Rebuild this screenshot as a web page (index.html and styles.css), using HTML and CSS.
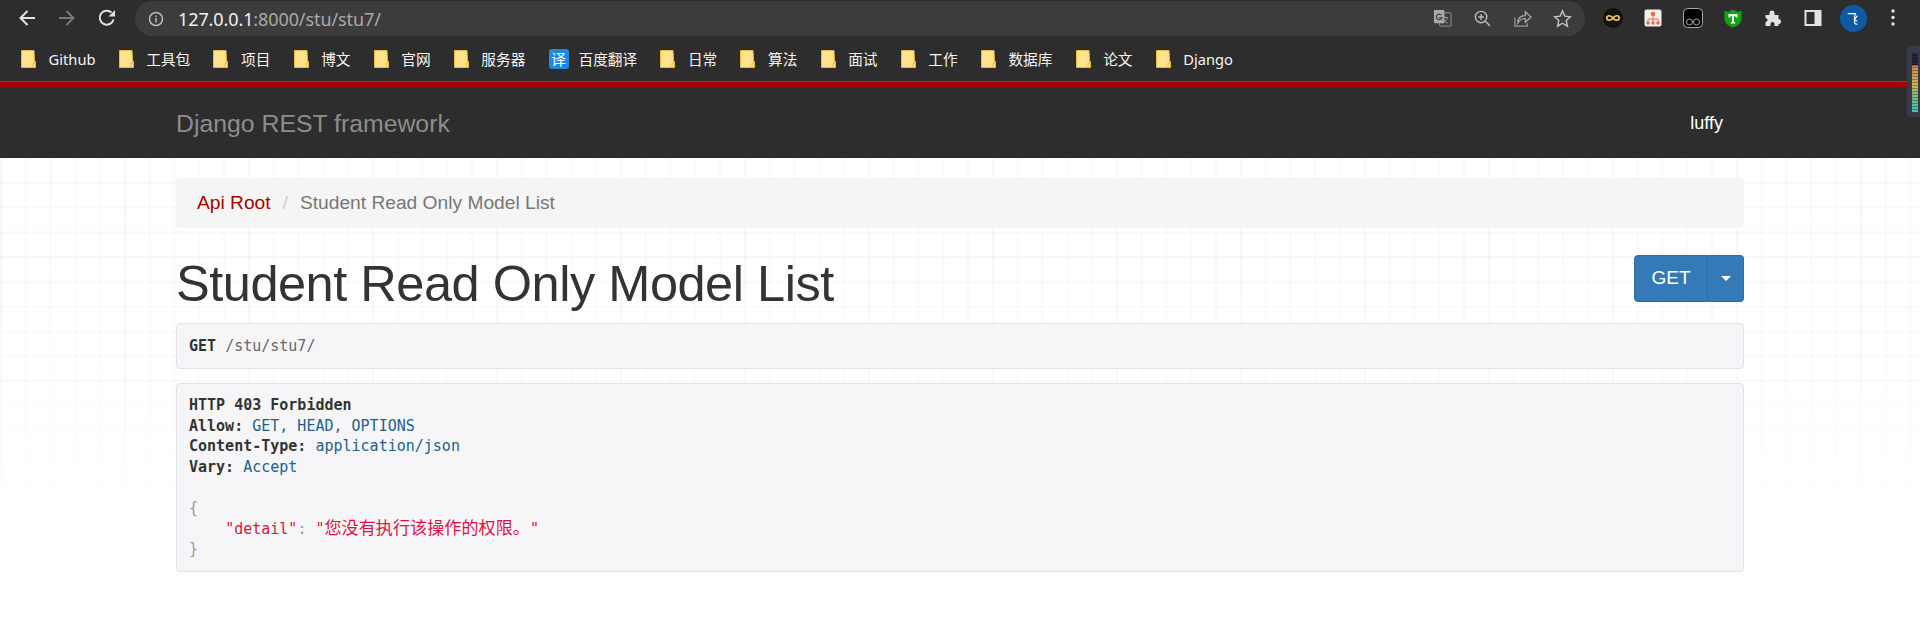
FILE: index.html
```html
<!DOCTYPE html>
<html lang="en">
<head>
<meta charset="utf-8">
<title>Student Read Only Model List</title>
<link rel="stylesheet" href="styles.css">
</head>
<body>
<svg class="defs" aria-hidden="true"><symbol id="folder" viewBox="0 0 15 18"><path d="M.5.500h12.500l.6 11h.9v6H.5z" fill="#ffe38a" stroke="#e8b93f"/><path d="M12 17v-4h2.500" fill="none" stroke="#e8b93f"/></symbol></svg>
<header class="chrome">
  <div class="toolbar">
    <div class="nav-buttons">
      <svg class="nav-icon" viewBox="0 0 20 20"><path d="M18 10H4M10.500 3 3.500 10l7 7" fill="none" stroke="#e3e3e3" stroke-width="2"/></svg>
      <svg class="nav-icon" viewBox="0 0 20 20"><path d="M2 10h14M9.500 3l7 7-7 7" fill="none" stroke="#777" stroke-width="2"/></svg>
      <svg class="nav-icon" viewBox="0 0 20 20"><path d="M16.500 11.500A7 7 0 1 1 14.500 4.500" fill="none" stroke="#e3e3e3" stroke-width="2"/><path d="M18 2v6.500h-6.500z" fill="#e3e3e3"/></svg>
    </div>
    <div class="omnibox">
      <svg class="info" viewBox="0 0 16 16"><circle cx="8" cy="8" r="6.500" fill="none" stroke="#bbb" stroke-width="1.500"/><path d="M8 7v4.500M8 4.500v1.500" stroke="#bbb" stroke-width="1.500"/></svg>
      <span class="url"><span class="host">127.0.0.1</span>:8000/stu/stu7/</span>
      <div class="omni-actions">
        <svg class="omni-icon" viewBox="0 0 20 20"><rect x="7" y="4" width="12" height="14" rx="1" fill="#3c3c3c" stroke="#999"/><path d="M10 9h6M13 8v1M15 9c-.5 3-2.500 5-5 6M11 11c1 2 2.500 3.500 5 4" fill="none" stroke="#999"/><rect x="1" y="1" width="11" height="14" rx="1" fill="#aaa"/><path d="M9 6.500A3 3 0 1 0 9.500 9H6.500" fill="none" stroke="#444" stroke-width="1.300"/></svg>
        <svg class="omni-icon" viewBox="0 0 20 20"><circle cx="8.500" cy="8.500" r="6" fill="none" stroke="#bbb" stroke-width="1.500"/><path d="M13 13l5 5M8.500 5.500v6M5.500 8.500h6" stroke="#bbb" stroke-width="1.500"/></svg>
        <svg class="omni-icon" viewBox="0 0 20 20"><path d="M2 9v9h13v-3" fill="none" stroke="#999" stroke-width="1.300"/><path d="M5 15c0-5 3-8 8-8V3l6 5.500-6 5.500v-4c-4 0-6 1.500-8 5z" fill="none" stroke="#aaa" stroke-width="1.300"/></svg>
        <svg class="omni-icon" viewBox="0 0 20 20"><path d="m10 2 2.400 5.500 6 .600-4.500 4 1.300 6L10 15l-5.200 3.100 1.300-6-4.500-4 6-.600z" fill="none" stroke="#c4c4c4" stroke-width="1.500"/></svg>
      </div>
    </div>
    <div class="extensions">
      <svg class="ext" viewBox="0 0 20 20"><circle cx="10" cy="10" r="10" fill="#15120c"/><path d="M10 10C8 7 4 7 3.800 10S8 13 10 10s6.200-3 6.200 0-4.200 3-6.200 0z" fill="none" stroke="#f0cf72" stroke-width="1.600"/></svg>
      <svg class="ext" viewBox="0 0 20 20"><rect x="1.500" y="1.500" width="17" height="17" rx="2" fill="#f3f0ec"/><circle cx="10" cy="6" r="2.300" fill="#f06a4a"/><path d="M10 8v3M5 14v-3h10v3M10 11v3" fill="none" stroke="#f06a4a"/><circle cx="5" cy="15" r="1.800" fill="#f06a4a"/><circle cx="10" cy="15" r="1.800" fill="#f06a4a"/><circle cx="15" cy="15" r="1.800" fill="#f06a4a"/></svg>
      <svg class="ext" viewBox="0 0 20 20"><rect x=".5" y=".5" width="19" height="19" rx="4" fill="#000" stroke="#aaa"/><circle cx="6.500" cy="14" r="3" fill="none" stroke="#aaa"/><circle cx="13.500" cy="14" r="3" fill="none" stroke="#aaa"/></svg>
      <svg class="ext" viewBox="0 0 20 20"><path d="M1.500 2.500 5 4l5-2.500L15 4l3.500-1.500V11c0 4-4 7-8.500 8.500C5.500 18 1.500 15 1.500 11z" fill="#0fa50f"/><path d="M5.500 6h9v3.500h-1.500L12 8h-1v6h1.200v1.500H7.800V14H9V8H8L7 9.500H5.500z" fill="#fff"/></svg>
      <svg class="ext" viewBox="0 0 20 20"><path d="M1 8h4V6a2.500 2.500 0 0 1 5 0v2h4v4a2.500 2.500 0 0 1 0 5v2H10v-2a2 2 0 0 0-4 0v2H1v-4a2 2 0 0 0 0-4z" transform="translate(1.500 -1)" fill="#e3e3e3"/></svg>
      <svg class="ext" viewBox="0 0 20 20"><rect x="1.500" y="2" width="17" height="16" fill="#e3e3e3"/><rect x="3.500" y="4" width="8" height="12" fill="#2d2d2d"/></svg>
      <div class="avatar"><svg viewBox="0 0 28 28"><path d="M8 9h8l-1 3M15 12v5c0 2 1 3 3 3M18 11l-3 4 3 2" fill="none" stroke="#fff" stroke-width="1.200"/></svg></div>
      <svg class="kebab" viewBox="0 0 6 20"><circle cx="3" cy="3" r="1.700" fill="#e3e3e3"/><circle cx="3" cy="9.500" r="1.700" fill="#e3e3e3"/><circle cx="3" cy="16" r="1.700" fill="#e3e3e3"/></svg>
    </div>
  </div>
  <nav class="bookmarks">
    <a class="bookmark"><svg class="folder"><use href="#folder"/></svg>Github</a>
    <a class="bookmark"><svg class="folder"><use href="#folder"/></svg>工具包</a>
    <a class="bookmark"><svg class="folder"><use href="#folder"/></svg>项目</a>
    <a class="bookmark"><svg class="folder"><use href="#folder"/></svg>博文</a>
    <a class="bookmark"><svg class="folder"><use href="#folder"/></svg>官网</a>
    <a class="bookmark"><svg class="folder"><use href="#folder"/></svg>服务器</a>
    <a class="bookmark"><span class="translate-icon">译</span>百度翻译</a>
    <a class="bookmark"><svg class="folder"><use href="#folder"/></svg>日常</a>
    <a class="bookmark"><svg class="folder"><use href="#folder"/></svg>算法</a>
    <a class="bookmark"><svg class="folder"><use href="#folder"/></svg>面试</a>
    <a class="bookmark"><svg class="folder"><use href="#folder"/></svg>工作</a>
    <a class="bookmark"><svg class="folder"><use href="#folder"/></svg>数据库</a>
    <a class="bookmark"><svg class="folder"><use href="#folder"/></svg>论文</a>
    <a class="bookmark"><svg class="folder"><use href="#folder"/></svg>Django</a>
  </nav>
</header>
<div class="site-nav">
  <div class="container nav-inner">
    <a class="brand">Django REST framework</a>
    <a class="user">luffy</a>
  </div>
  <div class="scroll-widget"><div class="meter"></div></div>
</div>
<main class="page">
  <div class="container">
    <ol class="breadcrumb">
      <li class="crumb-link">Api Root</li>
      <li class="crumb-sep">/</li>
      <li class="crumb-active">Student Read Only Model List</li>
    </ol>
    <div class="title-row">
      <h1>Student Read Only Model List</h1>
      <div class="btn-group">
        <span class="btn-main">GET</span>
        <span class="btn-caret"><i class="caret"></i></span>
      </div>
    </div>
    <pre class="request"><b>GET</b> <span class="path">/stu/stu7/</span></pre>
    <pre class="response"><b>HTTP 403 Forbidden</b>
<b>Allow:</b> <span class="val">GET, HEAD, OPTIONS</span>
<b>Content-Type:</b> <span class="val">application/json</span>
<b>Vary:</b> <span class="val">Accept</span>

<span class="pun">{</span>
    <span class="str">"detail"</span><span class="pun">:</span> <span class="str">"<span class="cjk">您没有执行该操作的权限。</span>"</span>
<span class="pun">}</span></pre>
  </div>
</main>
</body>
</html>
```
FILE: styles.css
```css
* { box-sizing: border-box; }
html, body { margin: 0; height: 632px; overflow: hidden; background: #fff; }
body { font-family: "Liberation Sans", "Noto Sans CJK SC", sans-serif; color: #333; }
.defs { display: none; }

.chrome { background: #2d2d2d; height: 81px; }
.toolbar { height: 36px; display: flex; align-items: center; padding: 0 0 0 17px; }
.nav-buttons { display: flex; gap: 20px; width: 118px; }
.nav-icon { width: 20px; height: 20px; }
.omnibox { width: 1450px; height: 35px; margin-top: 1px; background: #3c3c3c; border-radius: 18px; display: flex; align-items: center; padding: 0 13px 0 13px; }
.info { width: 16px; height: 16px; margin-right: 14px; }
.url { font-family: "Noto Sans", sans-serif; font-size: 18px; color: #a9a9a9; letter-spacing: -.1px; }
.host { color: #f0f0f0; }
.omni-actions { margin-left: auto; display: flex; gap: 21px; align-items: center; }
.omni-icon { width: 19px; height: 19px; display: block; }
.extensions { display: flex; align-items: center; padding-left: 18px; }
.ext { width: 20px; height: 20px; margin-right: 20px; flex: none; }
.avatar { width: 27px; height: 27px; border-radius: 50%; background: #0f5aa3; margin-left: -3.500px; margin-right: 23.500px; }
.avatar svg { display: block; width: 27px; height: 27px; }
.kebab { width: 6px; height: 20px; }

.bookmarks { height: 45px; display: flex; align-items: center; padding-left: 21px; font-family: "Noto Sans", "Noto Sans CJK SC", sans-serif; font-size: 14.670px; color: #f4f4f4; }
.bookmark { display: flex; align-items: center; margin-right: 23.200px; white-space: nowrap; }
.folder { width: 15px; height: 18px; margin-right: 12.600px; flex: none; }
.translate-icon { width: 20px; height: 20px; border-radius: 3px; background: #1e88e5; color: #fff; font-size: 15px; display: flex; align-items: center; justify-content: center; margin-right: 10px; }

.site-nav { background: #2d2d2d; height: 77px; border-top: 1px solid #6b5050; position: relative; }
.site-nav::before { content: ""; display: block; height: 6px; background: #a30000; }
.container { width: 1568px; margin: 0 auto; }
.nav-inner { display: flex; justify-content: space-between; align-items: center; height: 71px; padding-right: 21px; }
.brand { font-size: 24.800px; color: #8d8d8d; }
.user { font-size: 18px; color: #fff; }
.scroll-widget { position: absolute; right: 0; top: -36px; width: 13px; height: 71px; background: #343a4a; border-radius: 3px 0 0 3px; padding: 7px 2px 5px 5px; }
.meter { width: 6px; height: 100%; background: repeating-linear-gradient(to bottom, rgba(0,0,0,0) 0 2px, rgba(0,0,0,.3) 2px 3px), linear-gradient(to bottom, #23242c 0 20%, #c78a50 22%, #c8b94e 55%, #6fb88a 80%, #3fc4b0 100%); }

.page {
  height: 474px;
  padding-top: 20px;
  background-color: #fff;
  background-image:
    linear-gradient(to bottom, rgba(255,255,255,0) 0, rgba(255,255,255,.3) 200px, rgba(255,255,255,.7) 320px, #fff 346px),
    linear-gradient(to right, rgba(0,0,0,.012) 2px, transparent 2px),
    linear-gradient(to bottom, rgba(0,0,0,.012) 2px, transparent 2px),
    linear-gradient(to right, rgba(0,0,0,.022) 2px, transparent 2px),
    linear-gradient(to bottom, rgba(0,0,0,.022) 2px, transparent 2px);
  background-size: 100% 100%, 124px 124px, 124px 124px, 24.800px 24.800px, 24.800px 24.800px;
  background-position: 0 0, 0 -26px, 0 -26px, 0 -1px, 0 -1px;
  background-repeat: no-repeat, repeat, repeat, repeat, repeat;
}

.breadcrumb { list-style: none; margin: 0; height: 50px; background: #f5f5f5; border-radius: 4px; padding: 0 21px; display: flex; align-items: center; font-size: 19.200px; }
.crumb-link { color: #a30000; }
.crumb-sep { color: #ccc; margin: 0 12px; }
.crumb-active { color: #777; }

.title-row { display: flex; justify-content: space-between; align-items: center; height: 68px; margin-top: 17px; }
h1 { font-size: 50.500px; font-weight: 400; margin: 9px 0 0; color: #333; line-height: 1.100; letter-spacing: -.470px; }
.btn-group { display: flex; height: 47px; margin-top: -2px; color: #fff; font-size: 19px; }
.btn-main { width: 74px; background: #337ab7; border: 1px solid #2e6da4; border-radius: 4px 0 0 4px; display: flex; align-items: center; justify-content: center; }
.btn-caret { width: 36px; background: #337ab7; border: 1px solid #2e6da4; border-left: 0; border-radius: 0 4px 4px 0; display: flex; align-items: center; justify-content: center; }
.caret { width: 0; height: 0; border-top: 5px solid #fff; border-left: 5px solid transparent; border-right: 5px solid transparent; }

pre { margin: 0; font-family: "DejaVu Sans Mono", "Noto Sans CJK SC", monospace; font-size: 15px; line-height: 20.600px; background: #f6f6f9; border: 1px solid #e2e2ea; border-radius: 4px; color: #333; padding: 12px; }
.request { height: 46px; margin-top: 10px; }
.response { height: 189px; margin-top: 14px; padding-top: 11px; }
pre b { font-weight: 700; }
.path { color: #666; }
.val { color: #1f5f8b; }
.pun { color: #999; }
.str { color: #dd1144; }
.cjk { font-size: 17.140px; line-height: 1; }
```
